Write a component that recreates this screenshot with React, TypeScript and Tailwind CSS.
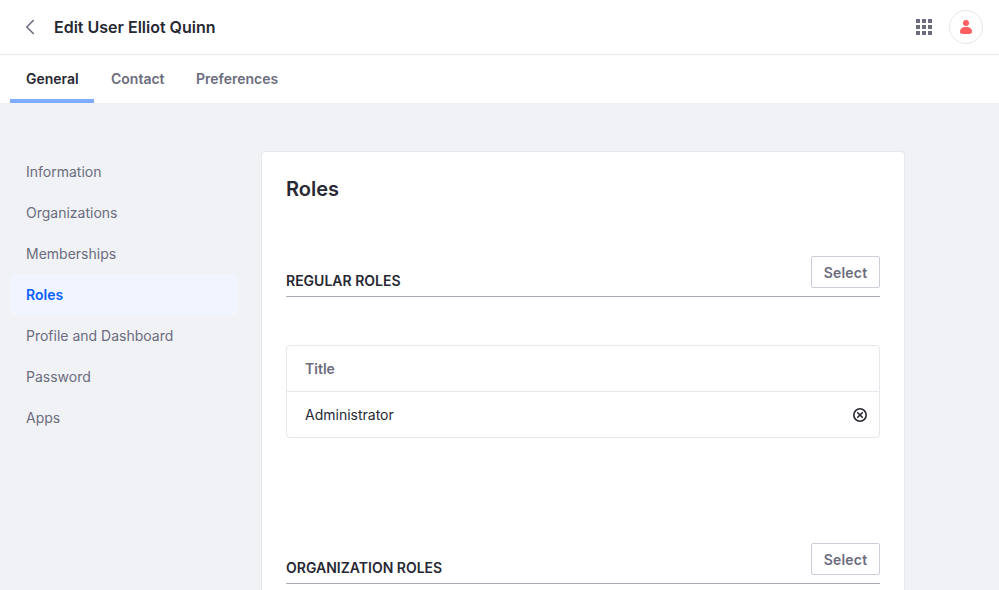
const items = ["Information", "Organizations", "Memberships", "Roles", "Profile and Dashboard", "Password", "Apps"];
const dots = [0, 6, 12];

function SectionHeader({ title }: { title: string }) {
  return (
    <div className="flex h-[41px] items-start justify-between border-b border-[#a7a9bc]">
      <h3 className="pt-[14px] text-sm leading-[21px] font-semibold">{title}</h3>
      <button className="h-8 w-[69px] rounded-[2px] border border-[#cdced9] bg-white pt-px text-sm font-semibold tracking-[0.2px] text-[#6b6c7e]">Select</button>
    </div>
  );
}

export default function App() {
  return (
    <div className="flex h-[590px] w-[999px] flex-col overflow-hidden bg-[#f1f2f5] font-['Inter',sans-serif] text-[#272833]">
      <header className="flex h-[55px] shrink-0 items-center border-b border-[#e7e7ed] bg-white pl-[25px] pr-4">
        <svg width="10" height="16" viewBox="0 0 10 16" fill="none" stroke="#6b6c7e" strokeWidth="1.6" strokeLinecap="round" strokeLinejoin="round"><path d="M8.3 1.5 1.8 8l6.5 6.5" /></svg>
        <h1 className="ml-[19px] flex-1 text-base font-semibold">Edit User Elliot Quinn</h1>
        <svg width="16" height="16" viewBox="0 0 16 16" fill="#6b6c7e" className="mr-[17px]">
          {dots.map((x) => dots.map((y) => <rect key={`${x}-${y}`} x={x} y={y} width="4" height="4" />))}
        </svg>
        <div className="flex size-[34px] items-center justify-center rounded-full border border-[#e7e7ed]">
          <svg width="14" height="14" viewBox="0 0 14 14" fill="#ff5f5f"><circle cx="7" cy="3" r="3" /><path d="M1 12c0-3.5 2-5 6-5s6 1.500 6 5c0 1.500-1 2-6 2s-6-.5-6-2Z" /></svg>
        </div>
      </header>
      <nav className="flex h-12 shrink-0 bg-white pl-[10px] text-sm font-semibold text-[#6b6c7e]">
        <span className="w-[84px] border-b-4 border-[#80acff] pl-4 pt-[14px] leading-5 text-[#272833]">General</span>
        <span className="w-[86px] pl-[17px] pt-[14px] leading-5">Contact</span>
        <span className="pl-4 pt-[14px] leading-5">Preferences</span>
      </nav>
      <main className="flex flex-1 items-start pl-[10px] pt-12">
        <aside className="mr-[23px] w-[228px] text-sm text-[#6b6c7e]">
          {items.map((item) => (
            <div key={item} className={item === "Roles" ? "flex h-[41px] items-center rounded-md bg-[#f0f5ff] pl-4 font-semibold text-[#0b5fff]" : "flex h-[41px] items-center pl-4"}>{item}</div>
          ))}
        </aside>
        <section className="h-[500px] w-[644px] rounded border border-[#e7e7ed] bg-white px-6">
          <h2 className="pt-[22px] text-xl leading-[30px] font-semibold">Roles</h2>
          <div className="mt-[52px]"><SectionHeader title="REGULAR ROLES" /></div>
          <div className="mt-12 h-[93px] rounded border border-[#e7e7ed] text-sm">
            <div className="flex h-[46px] items-center border-b border-[#e7e7ed] pl-[18px] font-semibold text-[#6b6c7e]">Title</div>
            <div className="flex h-[45px] items-center justify-between pl-[18px] pr-3">
              Administrator
              <svg width="14" height="14" viewBox="0 0 14 14" fill="none" stroke="#272833" strokeWidth="1.600" strokeLinecap="round"><circle cx="7" cy="7" r="6.200" /><path d="m4.700 4.700 4.600 4.600m0-4.600-4.600 4.600" /></svg>
            </div>
          </div>
          <div className="mt-[105px]"><SectionHeader title="ORGANIZATION ROLES" /></div>
        </section>
      </main>
    </div>
  );
}
